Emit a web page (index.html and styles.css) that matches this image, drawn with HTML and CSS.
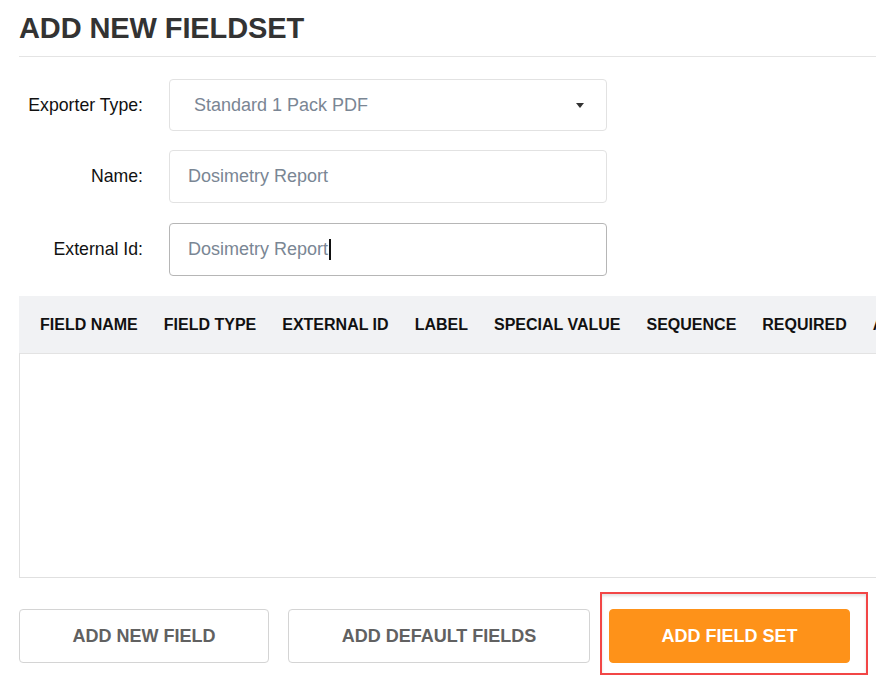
FILE: index.html
```html
<!DOCTYPE html>
<html>
<head>
<meta charset="utf-8">
<link rel="stylesheet" href="styles.css">
</head>
<body>
<div class="page">
  <h1 class="title">ADD NEW FIELDSET</h1>
  <div class="rule"></div>
  <div class="form">
    <div class="row row-select">
      <div class="label">Exporter Type:</div>
      <div class="control select">
        <span class="value sel">Standard 1 Pack PDF</span>
        <span class="arrow"></span>
      </div>
    </div>
    <div class="row row-name">
      <div class="label">Name:</div>
      <div class="control input"><span class="value">Dosimetry Report</span></div>
    </div>
    <div class="row row-ext">
      <div class="label">External Id:</div>
      <div class="control input focused"><span class="value">Dosimetry Report</span><span class="caret"></span></div>
    </div>
  </div>
  <div class="table">
    <div class="thead">
      <span>FIELD NAME</span>
      <span>FIELD TYPE</span>
      <span>EXTERNAL ID</span>
      <span>LABEL</span>
      <span>SPECIAL VALUE</span>
      <span>SEQUENCE</span>
      <span>REQUIRED</span>
      <span>ACTIONS</span>
    </div>
    <div class="tbody"></div>
  </div>
  <div class="actions">
    <button class="btn b1">ADD NEW FIELD</button>
    <button class="btn b2">ADD DEFAULT FIELDS</button>
    <div class="highlight">
      <button class="btn primary">ADD FIELD SET</button>
    </div>
  </div>
</div>
</body>
</html>
```
FILE: styles.css
```css
html, body {
  margin: 0;
  padding: 0;
  background: #ffffff;
  overflow: hidden;
}
body {
  font-family: "Liberation Sans", Arial, sans-serif;
  width: 876px;
  height: 675px;
}
.page {
  padding: 10px 0 0 19px;
  width: 1100px;
}
.title {
  margin: 0;
  font-size: 29px;
  line-height: 36px;
  font-weight: 700;
  color: #333333;
  letter-spacing: -0.1px;
}
.rule {
  margin-top: 10px;
  height: 1px;
  background: #e4e4e4;
}
.form {
  padding-top: 22px;
  display: flex;
  flex-direction: column;
}
.row {
  display: flex;
  align-items: center;
  gap: 26px;
}
.row-name { margin-top: 19px; }
.row-ext { margin-top: 20px; }
.label {
  width: 124px;
  text-align: right;
  font-size: 17.7px;
  color: #111111;
}
.control {
  box-sizing: border-box;
  width: 438px;
  border: 1px solid #e2e2e2;
  border-radius: 4px;
  display: flex;
  align-items: center;
  font-size: 18px;
  color: #7a8694;
}
.select {
  height: 52px;
  padding: 0 22px 0 24px;
  justify-content: space-between;
}
.input {
  height: 53px;
  padding: 0 18px;
}
.focused {
  border-color: #b6b6b6;
}
.arrow {
  width: 0;
  height: 0;
  border-left: 4px solid transparent;
  border-right: 4px solid transparent;
  border-top: 5px solid #333333;
}
.caret {
  display: inline-block;
  width: 1.5px;
  height: 21px;
  background: #111111;
  margin-left: 1px;
}
.table {
  margin-top: 20px;
  width: 1000px;
}
.thead {
  height: 57px;
  background: #f1f2f4;
  display: flex;
  align-items: center;
  gap: 26px;
  padding-left: 21px;
  font-size: 16px;
  font-weight: 700;
  color: #111111;
  white-space: nowrap;
}
.tbody {
  height: 223px;
  border-top: 1px solid #e3e3e3;
  border-left: 1px solid #e0e0e0;
  border-bottom: 1px solid #e0e0e0;
}
.actions {
  margin-top: 31px;
  display: flex;
  gap: 19px;
  align-items: flex-start;
}
.btn {
  box-sizing: border-box;
  height: 54px;
  border: 1px solid #d4d4d4;
  border-radius: 4px;
  background: #ffffff;
  font-family: "Liberation Sans", Arial, sans-serif;
  font-size: 18px;
  font-weight: 700;
  color: #616161;
  padding: 0;
  cursor: pointer;
}
.b1 { width: 250px; }
.b2 { width: 302px; }
.highlight {
  margin: -17px 0 0 -9px;
  padding: 15px 16px 10px 7px;
  border: 2px solid #f24646;
  box-shadow: inset 0 2px 3px rgba(0,0,0,0.12);
}
.primary {
  width: 241px;
  background: #fe9219;
  border-color: #fe9219;
  color: #ffffff;
}
```
